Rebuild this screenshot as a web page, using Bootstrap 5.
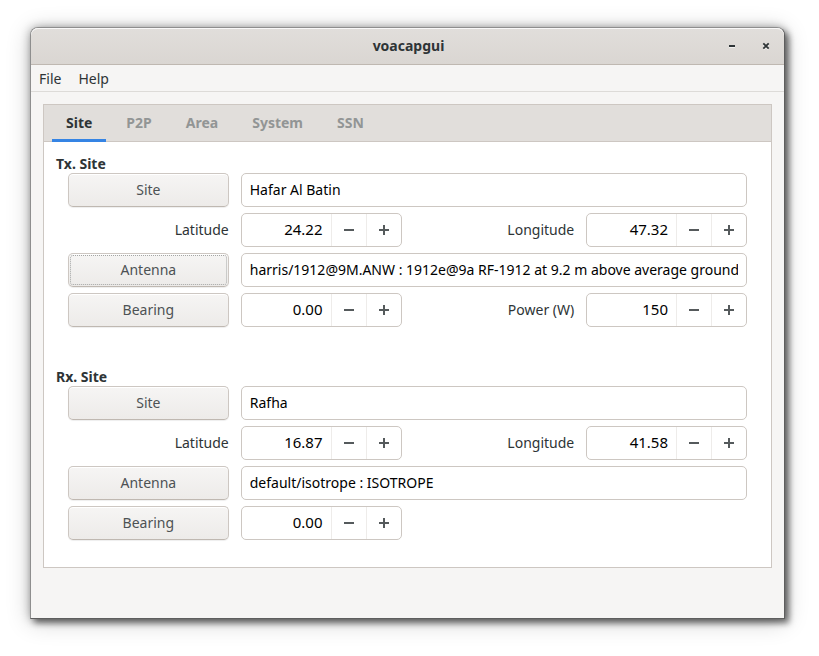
<!DOCTYPE html>
<html lang="en">
<head>
<meta charset="utf-8">
<meta name="viewport" content="width=device-width, initial-scale=1">
<title>voacapgui</title>
<link href="https://cdn.jsdelivr.net/npm/bootstrap@5.3.0/dist/css/bootstrap.min.css" rel="stylesheet">
<style>
  body { background: #fff; color: #2e3436; font: 14px/19px "Noto Sans", "Open Sans", sans-serif; padding: 27px 34px 37px 30px; }
  .app-window { background: #f6f5f4; border: 1px solid #5e5e5e; border-top-color: #8e8e8e; border-left-color: #8e8e8e; border-radius: 8px 8px 0 0; padding-bottom: 50px;
    box-shadow: 4px 4px 6px rgba(0,0,0,.5), 0 0 10px rgba(0,0,0,.3), 0 3px 24px rgba(0,0,0,.2); }
  .title-bar { height: 37px; padding: 0 12px; background: linear-gradient(#e1dedb, #dad6d2); border-bottom: 1px solid #bfb8b1; box-shadow: inset 0 1px #f9f8f8; border-radius: 7px 7px 0 0; }
  .title-bar h1 { font-size: 14px; line-height: 19px; font-weight: 700; padding-bottom: 2px; }
  .title-buttons { gap: 22px; }
  .win-btn { width: 12px; height: 24px; color: #2e3436; }
  .menu-bar { height: 27px; padding: 0 8px; gap: 17px; border-bottom: 1px solid #dddbd8; }
  .menu-bar button { color: #2e3436; }
  .notebook { margin: 12px 12px 0; border: 1px solid #cdc7c2; background: #fff; }
  .tab-strip { --bs-nav-tabs-border-width: 0; background: #e1dedb; border-bottom: 1px solid #cdc7c2; padding: 0 8px; gap: 6px; height: 37px; }
  .tab-strip .nav-link { height: 37px; padding: 0 14px; border: 0; border-radius: 0; margin: 0; color: #929595; font-weight: 700; line-height: 35px; padding-bottom: 2px; }
  .tab-strip .nav-link.active { color: #2e3436; background: transparent; box-shadow: inset 0 -3px #3584e4; }
  .page { padding: 12px 12px 27px; }
  .page section + section { margin-top: 40px; }
  .page h2 { font-size: 14px; line-height: 19px; font-weight: 700; margin: 0; }
  .page form { padding: 0 12px; }
  .page .row { --bs-gutter-x: 12px; --bs-gutter-y: 6px; }
  .page .row.first { --bs-gutter-y: 0; margin-bottom: 6px; }
  .page label { padding-bottom: 2px; }
  .btn-gtk { height: 34px; padding: 0 0 2px; font-size: 14px; line-height: 19px; color: #4d5254; border: 1px solid #cdc7c2; border-bottom-color: #bfb8b1; border-radius: 5px; background: linear-gradient(#f6f5f4, #edebe9); box-shadow: inset 0 1px #fff, 0 1px 1px rgba(0,0,0,.07); }
  .btn-gtk.focused { outline: 1px dotted #a3a5a4; outline-offset: -3px; }
  .entry { height: 34px; padding: 0 8px 2px; font-size: 14px; line-height: 19px; color: #000; border: 1px solid #cdc7c2; border-radius: 5px; }
  .spin { height: 34px; border: 1px solid #cdc7c2; border-radius: 5px; background: #fff; overflow: hidden; }
  .spin input { flex: 1 1 0; min-width: 0; padding: 0 8px 2px; border: 0; color: #000; font-size: 15px; text-align: right; background: transparent; }
  .spin button { flex: none; display: flex; align-items: center; justify-content: center; width: 35px; padding: 0; border: 0; border-left: 1px solid #eeecea; background: transparent; color: #555a5c; }
</style>
<script src="https://cdn.jsdelivr.net/npm/bootstrap@5.3.0/dist/js/bootstrap.bundle.min.js"></script>
</head>
<body>
<svg class="d-none" aria-hidden="true">
  <symbol id="minus" viewBox="0 0 12 12"><path d="M1 5h10v2H1z" fill="currentColor"/></symbol>
  <symbol id="plus" viewBox="0 0 12 12"><path d="M1 5h4V1h2v4h4v2H7v4H5V7H1z" fill="currentColor"/></symbol>
</svg>
<div class="app-window">
  <header class="title-bar d-flex align-items-center">
    <h1 class="flex-fill text-center m-0 ps-5">voacapgui</h1>
    <div class="title-buttons d-flex">
      <button class="win-btn btn p-0 border-0 d-flex align-items-center justify-content-center" aria-label="Minimize"><svg width="12" height="12"><path d="M3 5h6v2H3z" fill="currentColor"/><path d="M3 7h6v1H3z" fill="#fff" opacity=".6"/></svg></button>
      <button class="win-btn btn p-0 border-0 d-flex align-items-center justify-content-center" aria-label="Close"><svg width="12" height="12"><path d="M3.500 4.500l5 5m0-5l-5 5" stroke="#fff" stroke-width="2" opacity=".6"/><path d="M3.300 3.300l5.400 5.400m0-5.400l-5.400 5.400" stroke="currentColor" stroke-width="1.800"/></svg></button>
    </div>
  </header>
  <nav class="menu-bar d-flex align-items-center" aria-label="Menu">
    <button class="border-0 bg-transparent p-0">File</button>
    <button class="border-0 bg-transparent p-0">Help</button>
  </nav>
  <main class="notebook">
    <div class="nav nav-tabs tab-strip" role="tablist">
      <button class="nav-link active" role="tab" aria-selected="true">Site</button>
      <button class="nav-link" role="tab">P2P</button>
      <button class="nav-link" role="tab">Area</button>
      <button class="nav-link" role="tab">System</button>
      <button class="nav-link" role="tab">SSN</button>
    </div>
    <div class="page" role="tabpanel">
      <section>
        <h2>Tx. Site</h2>
        <form>
          <div class="row first">
            <div class="col-3"><button type="button" class="btn btn-gtk w-100">Site</button></div>
            <div class="col-9"><input class="entry form-control" aria-label="Tx site" value="Hafar Al Batin"></div>
          </div>
          <div class="row align-items-center">
            <div class="col-3 text-end"><label for="txlat">Latitude</label></div>
            <div class="col-3"><div class="spin d-flex"><input id="txlat" value="24.22"><button type="button" aria-label="Decrease"><svg width="12" height="12"><use href="#minus"/></svg></button><button type="button" aria-label="Increase"><svg width="12" height="12"><use href="#plus"/></svg></button></div></div>
            <div class="col-3 text-end"><label for="txlon">Longitude</label></div>
            <div class="col-3"><div class="spin d-flex"><input id="txlon" value="47.32"><button type="button" aria-label="Decrease"><svg width="12" height="12"><use href="#minus"/></svg></button><button type="button" aria-label="Increase"><svg width="12" height="12"><use href="#plus"/></svg></button></div></div>
            <div class="col-3"><button type="button" class="btn btn-gtk focused w-100">Antenna</button></div>
            <div class="col-9"><input class="entry form-control" aria-label="Tx antenna" value="harris/1912@9M.ANW : 1912e@9a RF-1912 at 9.2 m above average ground"></div>
            <div class="col-3"><button type="button" class="btn btn-gtk w-100">Bearing</button></div>
            <div class="col-3"><div class="spin d-flex"><input aria-label="Tx bearing" value="0.00"><button type="button" aria-label="Decrease"><svg width="12" height="12"><use href="#minus"/></svg></button><button type="button" aria-label="Increase"><svg width="12" height="12"><use href="#plus"/></svg></button></div></div>
            <div class="col-3 text-end"><label for="txpow">Power (W)</label></div>
            <div class="col-3"><div class="spin d-flex"><input id="txpow" value="150"><button type="button" aria-label="Decrease"><svg width="12" height="12"><use href="#minus"/></svg></button><button type="button" aria-label="Increase"><svg width="12" height="12"><use href="#plus"/></svg></button></div></div>
          </div>
        </form>
      </section>
      <section>
        <h2>Rx. Site</h2>
        <form>
          <div class="row first">
            <div class="col-3"><button type="button" class="btn btn-gtk w-100">Site</button></div>
            <div class="col-9"><input class="entry form-control" aria-label="Rx site" value="Rafha"></div>
          </div>
          <div class="row align-items-center">
            <div class="col-3 text-end"><label for="rxlat">Latitude</label></div>
            <div class="col-3"><div class="spin d-flex"><input id="rxlat" value="16.87"><button type="button" aria-label="Decrease"><svg width="12" height="12"><use href="#minus"/></svg></button><button type="button" aria-label="Increase"><svg width="12" height="12"><use href="#plus"/></svg></button></div></div>
            <div class="col-3 text-end"><label for="rxlon">Longitude</label></div>
            <div class="col-3"><div class="spin d-flex"><input id="rxlon" value="41.58"><button type="button" aria-label="Decrease"><svg width="12" height="12"><use href="#minus"/></svg></button><button type="button" aria-label="Increase"><svg width="12" height="12"><use href="#plus"/></svg></button></div></div>
            <div class="col-3"><button type="button" class="btn btn-gtk w-100">Antenna</button></div>
            <div class="col-9"><input class="entry form-control" aria-label="Rx antenna" value="default/isotrope : ISOTROPE"></div>
            <div class="col-3"><button type="button" class="btn btn-gtk w-100">Bearing</button></div>
            <div class="col-3"><div class="spin d-flex"><input aria-label="Rx bearing" value="0.00"><button type="button" aria-label="Decrease"><svg width="12" height="12"><use href="#minus"/></svg></button><button type="button" aria-label="Increase"><svg width="12" height="12"><use href="#plus"/></svg></button></div></div>
          </div>
        </form>
      </section>
    </div>
  </main>
</div>
</body>
</html>
